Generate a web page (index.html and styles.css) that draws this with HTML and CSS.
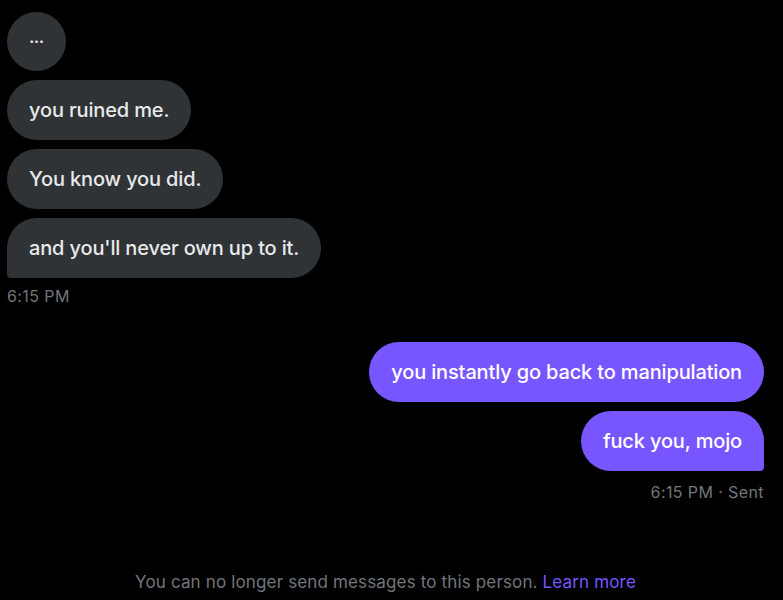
FILE: index.html
```html
<!DOCTYPE html>
<html>
<head lang="en">
    <meta charset="UTF-8">
    <title>Messages</title>
    <link rel="stylesheet" href="styles.css">
</head>
<body>
   <div id="chat">
       <div class="group them">
           <div class="bubble dots">...</div>
           <div class="bubble">you ruined me.</div>
           <div class="bubble">You know you did.</div>
           <div class="bubble last">and you'll never own up to it.</div>
           <div class="time">6:15 PM</div>
       </div>
       <div class="group me">
           <div class="bubble">you instantly go back to manipulation</div>
           <div class="bubble last">fuck you, mojo</div>
           <div class="time">6:15 PM &middot; Sent</div>
       </div>
       <p id="notice">You can no longer send messages to this person. <a href="">Learn more</a></p>
   </div>
</body>
</html>
```
FILE: styles.css
```css
*{
    margin: 0;
    padding: 0;
}
html,body{
    height: 100%;
    background: #000;
}
body{
    font-family: Inter, "Liberation Sans", sans-serif;
    color: #e7e9ea;
    overflow: hidden;
}
#chat{
    height: 100%;
    box-sizing: border-box;
    padding: 12px 19px 0 7px;
    display: flex;
    flex-direction: column;
}
.group{
    display: flex;
    flex-direction: column;
    gap: 9px;
}
.them{
    align-items: flex-start;
}
.me{
    align-items: flex-end;
    margin-top: 36px;
}
.bubble{
    height: 60px;
    box-sizing: border-box;
    padding: 0 22px;
    border-radius: 30px;
    font-size: 20px;
    font-weight: 500;
    line-height: 60px;
    white-space: nowrap;
    letter-spacing: -0.15px;
}
.them .bubble{
    background: #303336;
    color: #e7e9ea;
}
.them .bubble.last{
    border-bottom-left-radius: 4px;
}
.me .bubble{
    background: #7856ff;
    color: #fff;
}
.me .bubble.last{
    border-bottom-right-radius: 4px;
}
.bubble.dots{
    width: 59px;
    height: 59px;
    padding: 0;
    text-align: center;
    font-size: 15px;
    line-height: 52px;
    font-weight: bold;
}
.time{
    font-size: 16px;
    letter-spacing: 0.4px;
    color: #71767b;
    margin-top: -1px;
}
.me .time{
    margin-top: 2px;
}
#notice{
    margin-top: auto;
    padding-bottom: 8px;
    text-align: center;
    font-size: 17px;
    letter-spacing: 0.15px;
    color: #71767b;
}
#notice a{
    color: #7856ff;
    text-decoration: none;
}
```
